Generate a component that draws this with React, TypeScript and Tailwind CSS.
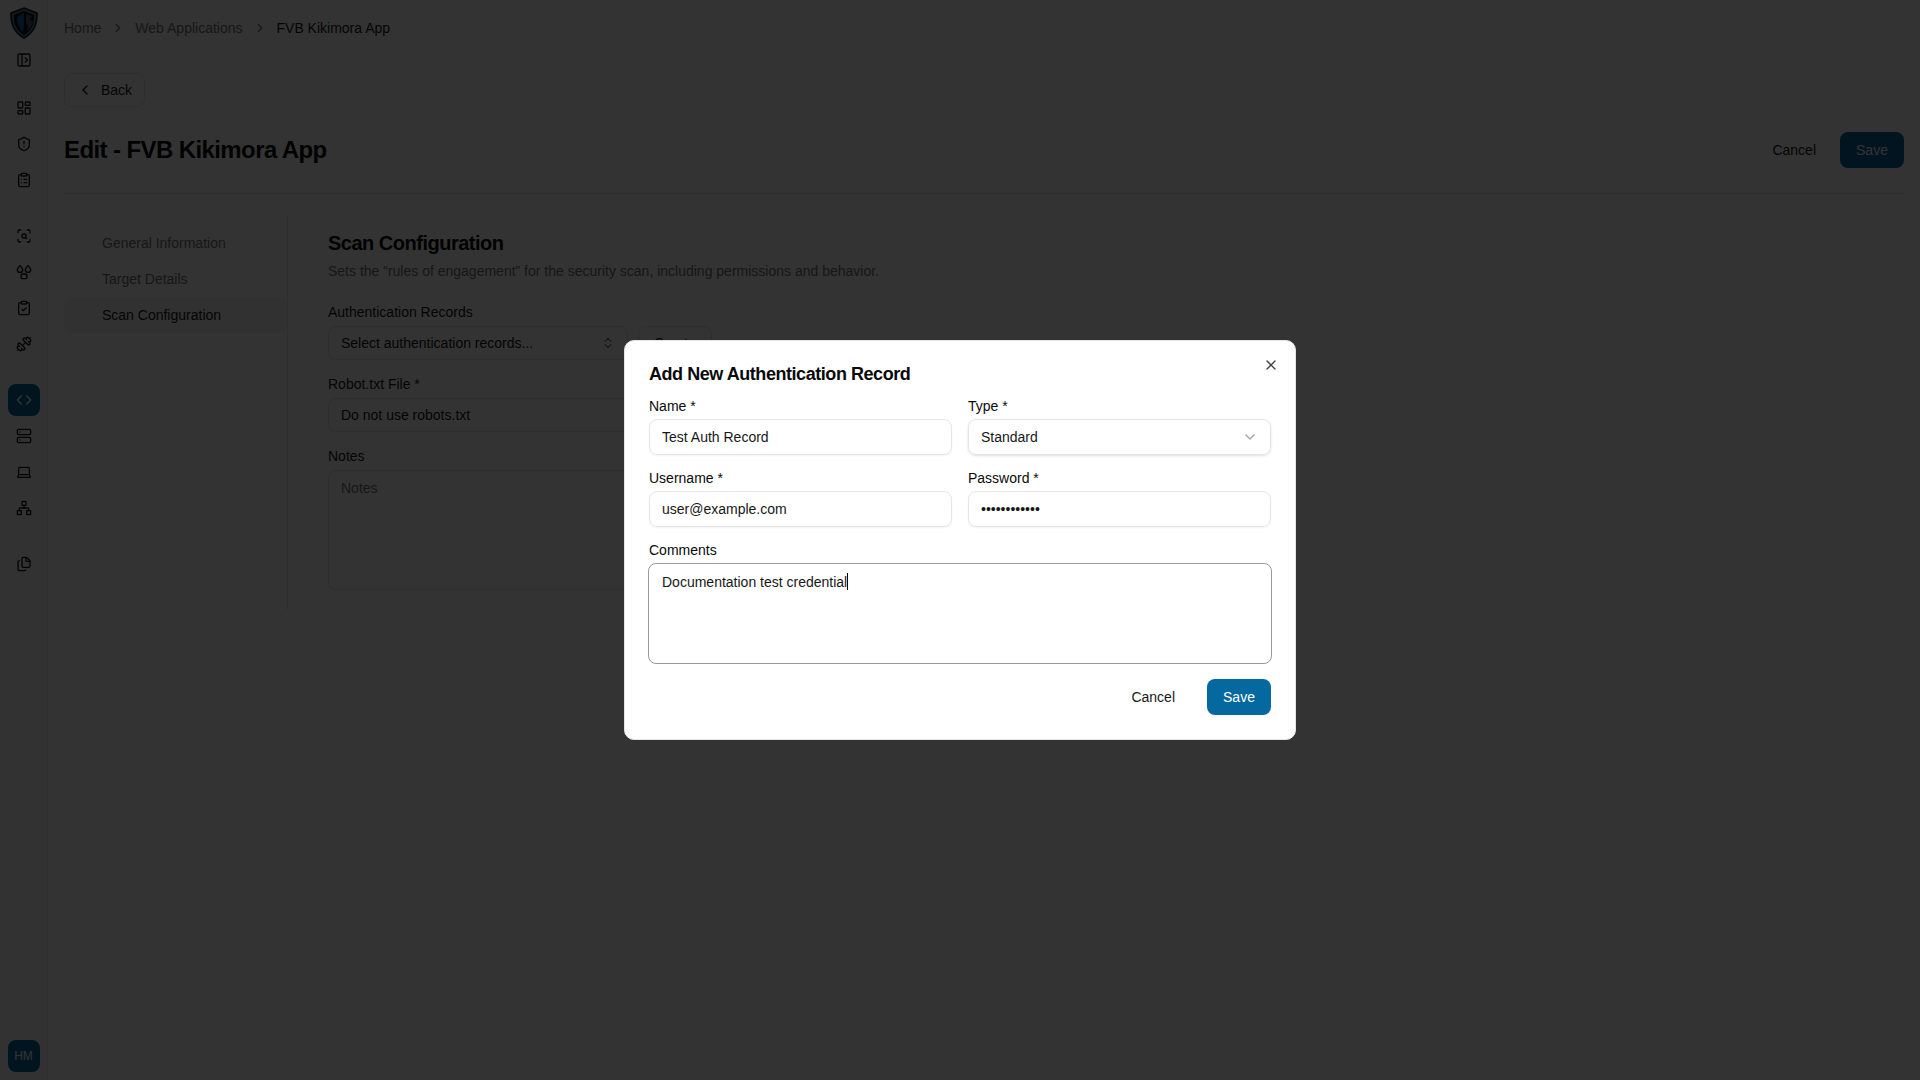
// Edit web application page with the "Add New Authentication Record" dialog open

import type { ReactNode } from "react";
import {
    ChevronDown,
    ChevronLeft,
    ChevronRight,
    ChevronsUpDown,
    ClipboardCheck,
    ClipboardList,
    Code,
    Dumbbell,
    Files,
    Laptop,
    LayoutDashboard,
    Network,
    PanelLeftOpen,
    ScanSearch,
    Server,
    ShieldAlert,
    X,
} from "lucide-react";

const Logo = () => (
    <svg width="30" height="32" viewBox="0 0 30 32" fill="none">
        <path d="M15 1 L28 6 C28.5 16 26 25 15 31 C4 25 1.5 16 2 6 Z" fill="#6b7280" stroke="#111827" strokeWidth="1.5" />
        <path d="M15 4 L25 8 C25.5 16 23 23.5 15 28 C7 23.5 4.5 16 5 8 Z" fill="#0a0f18" />
        <path d="M15 6 C11 7 9 9 8 11 C8 17 10 21 14 25 C15 21 15 12 15 6 Z" fill="#0f6bab" />
        <path d="M17 7 L23 9 L21 13 L24 14 C23 19 21 22 18 24 L19 19 L17 16 Z" fill="#4b5563" />
    </svg>
);

const NodesIcon = () => (
    <svg width="16" height="16" viewBox="0 0 16 16" fill="none" stroke="currentColor" strokeWidth="1.33" strokeLinejoin="round">
        <path d="M4 1.5 C5 3 6.7 4.3 6.7 5.7 A2.5 2.5 0 0 1 1.3 5.7 C1.3 4.3 3 3 4 1.5 Z" />
        <path d="M12 1.5 C13 3 14.7 4.3 14.7 5.7 A2.5 2.5 0 0 1 9.3 5.7 C9.3 4.3 11 3 12 1.5 Z" />
        <rect x="5" y="10" width="6" height="4.7" rx="2" />
    </svg>
);

const SideIcon = ({ children, active = false }: { children: ReactNode; active?: boolean }) => (
    <div className={active ? "flex h-8 w-8 items-center justify-center rounded-lg bg-[#05689f] text-white" : "flex h-8 w-8 items-center justify-center rounded-lg text-[#171717]"}>
        {children}
    </div>
);

const Sidebar = () => (
    <aside className="flex h-full w-12 shrink-0 flex-col items-center border-r border-[#e5e5e5] bg-[#fafafa] px-2">
        <div className="flex h-[44px] w-8 items-center justify-center pt-0.5">
            <Logo />
        </div>
        <SideIcon><PanelLeftOpen size={16} /></SideIcon>
        <div className="mt-4 flex flex-col gap-1">
            <SideIcon><LayoutDashboard size={16} /></SideIcon>
            <SideIcon><ShieldAlert size={16} /></SideIcon>
            <SideIcon><ClipboardList size={16} /></SideIcon>
        </div>
        <div className="mt-6 flex flex-col gap-1">
            <SideIcon><ScanSearch size={16} /></SideIcon>
            <SideIcon><NodesIcon /></SideIcon>
            <SideIcon><ClipboardCheck size={16} /></SideIcon>
            <SideIcon><Dumbbell size={16} /></SideIcon>
        </div>
        <div className="mt-6 flex flex-col gap-1">
            <SideIcon active><Code size={16} /></SideIcon>
            <SideIcon><Server size={16} /></SideIcon>
            <SideIcon><Laptop size={16} /></SideIcon>
            <SideIcon><Network size={16} /></SideIcon>
        </div>
        <div className="mt-6 flex flex-col gap-1">
            <SideIcon><Files size={16} /></SideIcon>
        </div>
        <div className="mt-auto mb-2 flex h-8 w-8 items-center justify-center rounded-lg bg-[#05689f] text-xs text-white">
            HM
        </div>
    </aside>
);

const Breadcrumb = () => (
    <nav className="flex h-14 items-center gap-2.5 text-sm text-[#737373]">
        <span>Home</span>
        <ChevronRight size={14} />
        <span>Web Applications</span>
        <ChevronRight size={14} />
        <span className="text-[#171717]">FVB Kikimora App</span>
    </nav>
);

const PageHeader = () => (
    <div className="mt-[17px] flex flex-col border-b border-[#e5e5e5] pb-[25px]">
        <button className="flex h-[34px] w-[81px] items-center gap-2 rounded-lg border border-[#e5e5e5] pl-3 text-sm text-[#171717]">
            <ChevronLeft size={16} />
            Back
        </button>
        <div className="mt-[25px] flex h-9 items-center justify-between">
            <h1 className="text-2xl font-bold tracking-tight text-[#0a0a0a]">Edit - FVB Kikimora App</h1>
            <div className="flex items-center gap-2">
                <button className="h-9 px-4 text-sm text-[#171717]">Cancel</button>
                <button className="h-9 w-16 rounded-lg bg-[#05689f] text-sm text-white">Save</button>
            </div>
        </div>
    </div>
);

const SideNav = () => (
    <div className="flex w-[223px] shrink-0 flex-col pt-[10px] text-sm text-[#737373]">
        <div className="flex h-9 items-center pl-[38px]">General Information</div>
        <div className="flex h-9 items-center pl-[38px]">Target Details</div>
        <div className="flex h-9 items-center rounded-lg bg-[#f5f5f5] pl-[38px] text-[#171717]">Scan Configuration</div>
    </div>
);

const ScanForm = () => (
    <div className="flex w-[900px] flex-col pl-10">
        <h2 className="mt-[17px] text-xl leading-[22px] font-semibold tracking-tight text-[#0a0a0a]">Scan Configuration</h2>
        <p className="mt-[7px] text-sm leading-5 text-[#737373]">Sets the “rules of engagement” for the security scan, including permissions and behavior.</p>
        <div className="mt-6 flex flex-col gap-[17px] text-sm text-[#171717]">
            <div className="flex flex-col gap-[7px]">
                <label className="leading-[14px]">Authentication Records</label>
                <div className="flex gap-2.5">
                    <div className="flex h-[34px] w-[300px] items-center justify-between rounded-lg border border-[#e5e5e5] px-3">
                        Select authentication records...
                        <ChevronsUpDown size={14} className="text-[#737373]" />
                    </div>
                    <button className="h-[34px] rounded-lg border border-[#e5e5e5] px-[15px]">Create</button>
                </div>
            </div>
            <div className="flex flex-col gap-[7px]">
                <label className="leading-[14px]">Robot.txt File *</label>
                <div className="flex h-[34px] items-center rounded-lg border border-[#e5e5e5] pl-3">Do not use robots.txt</div>
            </div>
            <div className="flex flex-col gap-[7px]">
                <label className="leading-[14px]">Notes</label>
                <div className="h-[120px] rounded-lg border border-[#e5e5e5] px-3 py-[7px] text-[#737373]">Notes</div>
            </div>
        </div>
    </div>
);

const Field = ({ label, value, type = "text" }: { label: string; value: string; type?: string }) => (
    <div className="flex flex-col gap-1.5">
        <label className="text-sm leading-[14px] text-[#0a0a0a]">{label}</label>
        <input
            type={type}
            value={value}
            readOnly
            className="h-9 rounded-lg border border-[#e5e5e5] px-3 text-sm text-[#171717] shadow-xs outline-none" />
    </div>
);

const AuthRecordDialog = () => (
    <div className="fixed inset-0 flex items-center justify-center bg-black/80">
        <div className="relative flex h-[400px] w-[672px] flex-col gap-4 rounded-[10px] border border-[#e5e5e5] bg-white p-6">
            <button className="absolute top-4 right-4 text-[#404040]">
                <X size={16} />
            </button>
            <h3 className="text-lg leading-[18px] font-semibold tracking-tight text-[#0a0a0a]">Add New Authentication Record</h3>
            <div className="grid grid-cols-2 gap-4">
                <Field label="Name *" value="Test Auth Record" />
                <div className="flex flex-col gap-1.5">
                    <label className="text-sm leading-[14px] text-[#0a0a0a]">Type *</label>
                    <div className="flex h-9 items-center justify-between rounded-lg border border-[#e5e5e5] px-3 text-sm text-[#171717] shadow-sm">
                        Standard
                        <ChevronDown size={16} className="text-[#a3a3a3]" />
                    </div>
                </div>
                <Field label="Username *" value="user@example.com" />
                <Field label="Password *" value="password1234" type="password" />
            </div>
            <div className="flex flex-col gap-1.5">
                <label className="text-sm leading-[14px] text-[#0a0a0a]">Comments</label>
                <div className="-mx-px h-[101px] rounded-lg border border-[#9a9a9a] px-[13px] py-1.5 text-sm leading-5 text-[#171717]">
                    Documentation test credential<span className="inline-block h-[17px] w-px translate-y-[3px] bg-black" />
                </div>
            </div>
            <div className="-mt-px flex justify-end gap-4">
                <button className="h-9 px-4 text-sm text-[#171717]">Cancel</button>
                <button className="h-9 w-16 rounded-lg bg-[#05689f] text-sm text-white">Save</button>
            </div>
        </div>
    </div>
);

const App = () => {
    return (
        <div className="flex h-screen overflow-hidden bg-white font-['Liberation_Sans',sans-serif]">
            <Sidebar />
            <main className="flex min-w-0 flex-1 flex-col px-4">
                <Breadcrumb />
                <PageHeader />
                <div className="mt-[21px] flex">
                    <SideNav />
                    <div className="h-[395px] border-l border-[#e5e5e5]">
                        <ScanForm />
                    </div>
                </div>
            </main>
            <AuthRecordDialog />
        </div>
    );
}

export default App;
